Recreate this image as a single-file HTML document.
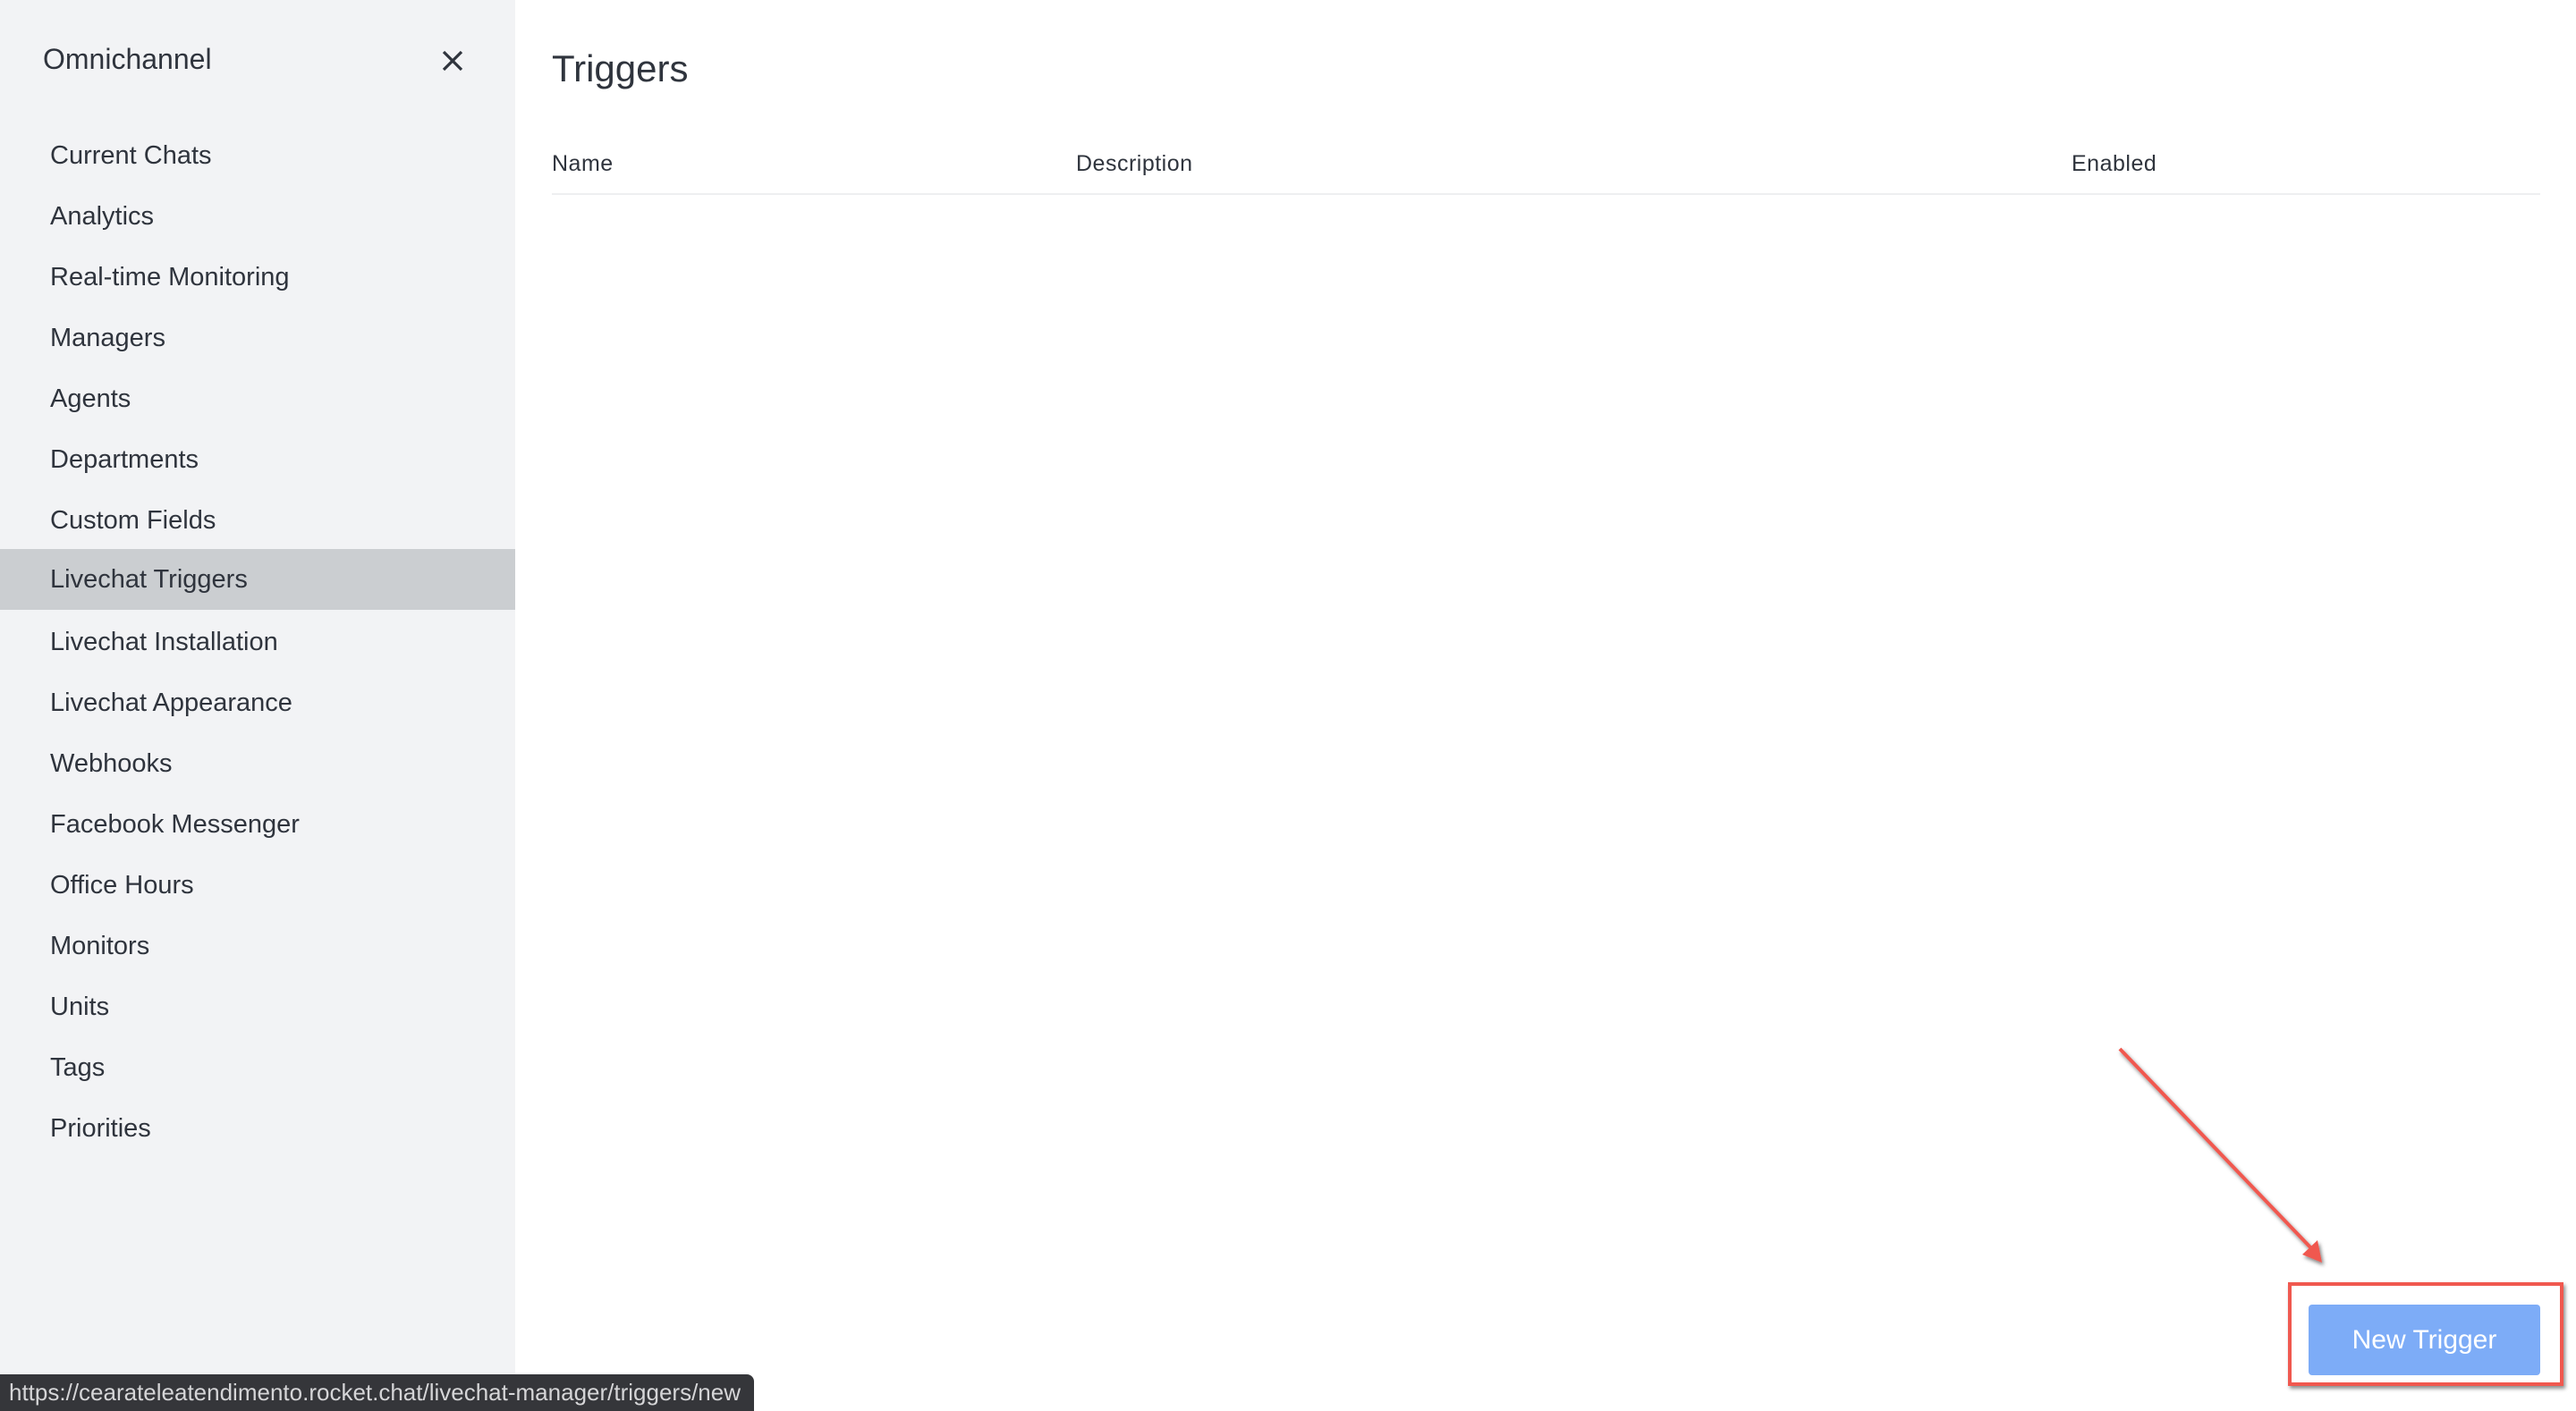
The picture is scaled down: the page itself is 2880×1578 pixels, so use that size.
<!DOCTYPE html>
<html><head><meta charset="utf-8"><style>
html,body{margin:0;padding:0;width:2880px;height:1578px;overflow:hidden;background:#fff;font-family:"Liberation Sans",sans-serif;color:#2f343d}
.side{position:absolute;left:0;top:0;width:576px;height:1578px;background:#f2f3f5}
.om{position:absolute;left:48px;top:48px;font-size:32px;color:#2f343d}
.x{position:absolute;left:490px;top:52px}
.item{position:absolute;left:0;width:576px;height:68px;line-height:68px;padding-left:56px;box-sizing:border-box;font-size:29px;color:#2f343d}
.sel{background:#cbced1}
.title{position:absolute;left:617px;top:53px;font-size:42px;color:#2f343d}
.th{position:absolute;top:169px;font-size:25px;color:#2f343d;letter-spacing:0.5px}
.line{position:absolute;left:617px;top:216px;width:2223px;height:2px;background:#eeeff1}
.btn{position:absolute;left:2581px;top:1459px;width:259px;height:79px;background:#7dacf7;border-radius:4px;color:#fff;font-size:30px;line-height:79px;text-align:center}
.box{position:absolute;left:2558px;top:1434px;width:308px;height:116px;border:4px solid #f0584f;box-sizing:border-box;box-shadow:2px 3px 4px rgba(0,0,0,.45)}
.status{position:absolute;left:0;top:1537px;width:843px;height:41px;background:#35363a;border-top-right-radius:8px;color:#d5d5d7;font-size:26px;line-height:41px;padding-left:10px;box-sizing:border-box}
</style></head><body>
<div class="side">
<div class="om">Omnichannel</div>
<svg class="x" width="32" height="32" viewBox="0 0 32 32"><path d="M6 6L26 26M26 6L6 26" stroke="#2f343d" stroke-width="3.2"/></svg>
<div class="item" style="top:140px">Current Chats</div>
<div class="item" style="top:208px">Analytics</div>
<div class="item" style="top:276px">Real-time Monitoring</div>
<div class="item" style="top:344px">Managers</div>
<div class="item" style="top:412px">Agents</div>
<div class="item" style="top:480px">Departments</div>
<div class="item" style="top:548px">Custom Fields</div>
<div class="item sel" style="top:614px">Livechat Triggers</div>
<div class="item" style="top:684px">Livechat Installation</div>
<div class="item" style="top:752px">Livechat Appearance</div>
<div class="item" style="top:820px">Webhooks</div>
<div class="item" style="top:888px">Facebook Messenger</div>
<div class="item" style="top:956px">Office Hours</div>
<div class="item" style="top:1024px">Monitors</div>
<div class="item" style="top:1092px">Units</div>
<div class="item" style="top:1160px">Tags</div>
<div class="item" style="top:1228px">Priorities</div>
</div>
<div class="title">Triggers</div>
<div class="th" style="left:617px">Name</div>
<div class="th" style="left:1203px">Description</div>
<div class="th" style="left:2316px">Enabled</div>
<div class="line"></div>
<svg style="position:absolute;left:0;top:0" width="2880" height="1578">
<defs><filter id="s"><feDropShadow dx="2" dy="3" stdDeviation="2" flood-opacity="0.5"/></filter></defs>
<g filter="url(#s)"><line x1="2370" y1="1173" x2="2585" y2="1397" stroke="#f0584f" stroke-width="4"/>
<path d="M2596 1412L2574 1403L2591 1387Z" fill="#f0584f"/></g>
</svg>
<div class="box"></div>
<div class="btn">New Trigger</div>
<div class="status">https://cearateleatendimento.rocket.chat/livechat-manager/triggers/new</div>
</body></html>
